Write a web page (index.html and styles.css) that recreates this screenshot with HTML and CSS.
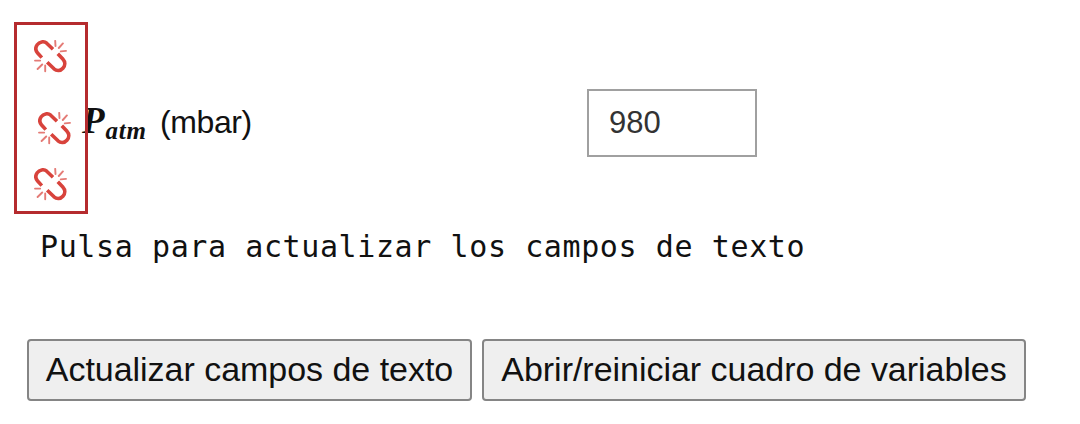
FILE: index.html
```
<!DOCTYPE html>
<html lang="es">
<head>
<meta charset="utf-8">
<title>Variables</title>
<link rel="stylesheet" href="styles.css">
</head>
<body>
<svg class="defs" aria-hidden="true">
  <symbol id="unlink" viewBox="0 0 33 33">
    <g fill="none" stroke="#d8433c" stroke-linecap="round" stroke-linejoin="round">
      <path stroke-width="3.6" stroke-linecap="butt" d="M7.8 17.6L3.6 13C1.5 10.5 1.2 7.5 3.2 4.8C5.5 1.6 9.8.8 12.7 3.2L19 9.2M13.2 22.2L20 28.8C22.8 31.3 26.4 31 28.9 28.2C31.4 25.4 31.4 21.8 28.8 19L23.8 13.8"/>
      <path stroke-width="1.9" opacity=".7" d="M21.2.9L21.5 6M28.9 3.4L24.8 8M26.8 11.4L32 10.9M1 20.6H6.2M3.6 29L8.2 24.5M11.2 25.5V31.2"/>
    </g>
  </symbol>
</svg>
<main class="page">
  <section class="fields">
    <svg class="icon"><use href="#unlink"/></svg>
    <div class="row">
      <svg class="icon icon-row"><use href="#unlink"/></svg>
      <label class="label" for="patm"><span class="symbol">P<span class="sub">atm</span></span><span class="unit">(mbar)</span></label>
      <input class="value" id="patm" type="text" value="980">
    </div>
    <svg class="icon"><use href="#unlink"/></svg>
    <div class="highlight"></div>
  </section>
  <p class="hint">Pulsa para actualizar los campos de texto</p>
  <div class="actions">
    <button class="button update" type="button">Actualizar campos de texto</button>
    <button class="button reset" type="button">Abrir/reiniciar cuadro de variables</button>
  </div>
</main>
</body>
</html>
```
FILE: styles.css
```
* { box-sizing: border-box; }
body {
  margin: 0;
  background: #fff;
  color: #111;
  font-family: "Liberation Sans", Arial, sans-serif;
}
.defs { position: absolute; width: 0; height: 0; }
.page { height: 424px; overflow: hidden; padding-top: 22px; }
.fields {
  position: relative;
  height: 192px;
  padding: 18px 0 0 34px;
}
.icon { display: block; width: 33px; height: 33px; flex: none; }
.row { display: flex; height: 68px; margin: 16px 0 11px; }
.icon-row { margin: 23px 0 0 4px; }
.label {
  display: flex;
  align-items: baseline;
  width: 516px;
  padding: 12px 0 0 11px;
  white-space: nowrap;
}
.symbol {
  width: 78px;
  font: italic bold 37px/40px "Liberation Serif", "Times New Roman", serif;
}
.sub {
  position: relative;
  top: 6px;
  margin-left: 1px;
  font-size: 25px;
  line-height: 1;
  letter-spacing: 0.7px;
}
.unit { font-size: 32px; line-height: 40px; letter-spacing: -0.4px; }
.value {
  width: 170px;
  height: 68px;
  padding: 0 20px;
  border: 2px solid #a0a0a0;
  border-radius: 0;
  background: #fff;
  color: #333;
  font: 31px "Liberation Sans", Arial, sans-serif;
}
.highlight {
  position: absolute;
  left: 14px;
  top: 0;
  width: 74px;
  height: 192px;
  border: 3px solid #b52b2e;
}
.hint {
  margin: 13px 0 0 40px;
  font: 30px/40px "DejaVu Sans Mono", monospace;
  letter-spacing: 0.6px;
  white-space: nowrap;
}
.actions { display: flex; gap: 10px; margin: 72px 0 0 27px; }
.button {
  height: 62px;
  padding: 0 0 2px;
  border: 2px solid #858585;
  border-radius: 4px;
  background: #efefef;
  color: #111;
  font: 34px "Liberation Sans", Arial, sans-serif;
  letter-spacing: -0.03px;
  white-space: nowrap;
}
.update { width: 445px; }
.reset { width: 544px; }
```
